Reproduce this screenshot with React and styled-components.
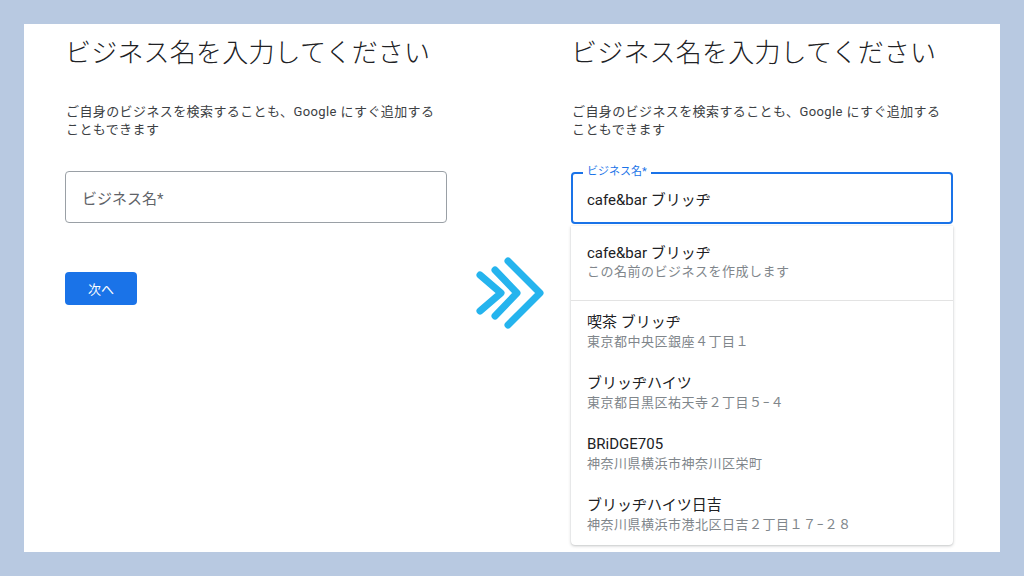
import React from "react";
import styled, { createGlobalStyle } from "styled-components";

const GlobalStyle = createGlobalStyle`
  html, body {
    margin: 0;
    padding: 0;
    background: #b8c9e1;
  }
  body {
    font-family: Roboto, "Noto Sans CJK JP", sans-serif;
    -webkit-font-smoothing: antialiased;
  }
`;

const Stage = styled.div`
  width: 1024px;
  height: 576px;
  padding: 24px;
  box-sizing: border-box;
`;

const Panel = styled.div`
  width: 976px;
  height: 528px;
  background: #ffffff;
  box-sizing: border-box;
  padding: 12px 47px 0 41px;
  display: flex;
  align-items: flex-start;
  overflow: hidden;
`;

const Column = styled.div`
  width: 382px;
  display: flex;
  flex-direction: column;
`;

const Middle = styled.div`
  width: 124px;
  display: flex;
  justify-content: center;
  padding: 219px 0 0 2px;
  box-sizing: border-box;
`;

const Title = styled.h1`
  margin: 0;
  font-family: Roboto, "Noto Sans CJK JP", sans-serif;
  font-size: 26px;
  font-weight: 300;
  line-height: 34px;
  letter-spacing: 0.2px;
  color: #202124;
  white-space: nowrap;
`;

const Desc = styled.p`
  margin: 33px 0 0 1px;
  font-size: 13px;
  line-height: 18px;
  letter-spacing: 0.4px;
  color: #3c4043;
  white-space: nowrap;
`;

const Field = styled.div`
  position: relative;
  margin-top: ${(p) => (p.$focused ? "33px" : "32px")};
  height: 52px;
  box-sizing: border-box;
  border: ${(p) => (p.$focused ? "2px solid #1a73e8" : "1px solid #9aa0a6")};
  border-radius: 4px;
  display: flex;
  align-items: center;
  padding-left: ${(p) => (p.$focused ? "14px" : "16px")};
  font-size: 15px;
  color: ${(p) => (p.$focused ? "#202124" : "#5f6368")};
`;

const FloatLabel = styled.span`
  position: absolute;
  left: 10px;
  top: -8px;
  padding: 0 4px;
  background: #ffffff;
  font-size: 11px;
  line-height: 12px;
  color: #1a73e8;
`;

const NextButton = styled.button`
  margin-top: 49px;
  width: 72px;
  height: 33px;
  border: none;
  border-radius: 4px;
  background: #1a73e8;
  color: #ffffff;
  font-family: Roboto, "Noto Sans CJK JP", sans-serif;
  font-size: 13px;
  padding: 0;
`;

const Dropdown = styled.div`
  margin-top: 2px;
  background: #ffffff;
  border-radius: 0 0 4px 4px;
  box-shadow: 0 1px 3px rgba(60, 64, 67, 0.3), 0 0 1px rgba(60, 64, 67, 0.15);
`;

const CreateRow = styled.div`
  padding: 17px 16px 19px;
  border-bottom: 1px solid #e3e3e3;
`;

const Item = styled.div`
  padding: 11px 16px;
`;

const ItemTitle = styled.div`
  font-size: 15px;
  line-height: 20px;
  color: #202124;
`;

const ItemSub = styled.div`
  font-size: 13px;
  line-height: ${(p) => (p.$tall ? "19px" : "18px")};
  color: #80868b;
  letter-spacing: 0.5px;
`;

const Chevrons = () => (
  <svg width="72" height="76" viewBox="0 0 72 76" fill="none">
    <g stroke="#25b4ee" strokeWidth="7" strokeLinecap="round" strokeLinejoin="round">
      <path d="M6 20 L27 38 L6 56" />
      <path d="M21 15 L43 38 L21 61" />
      <path d="M34 6 L66 38 L34 70" />
    </g>
  </svg>
);

const results = [
  { name: "喫茶 ブリッヂ", addr: "東京都中央区銀座４丁目１" },
  { name: "ブリッヂハイツ", addr: "東京都目黒区祐天寺２丁目５−４" },
  { name: "BRiDGE705", addr: "神奈川県横浜市神奈川区栄町" },
  { name: "ブリッヂハイツ日吉", addr: "神奈川県横浜市港北区日吉２丁目１７−２８" },
];

function Heading() {
  return (
    <>
      <Title>ビジネス名を入力してください</Title>
      <Desc>
        ご自身のビジネスを検索することも、Google にすぐ追加する
        <br />
        こともできます
      </Desc>
    </>
  );
}

export default function App() {
  return (
    <Stage>
      <GlobalStyle />
      <Panel>
        <Column>
          <Heading />
          <Field>ビジネス名*</Field>
          <NextButton>次へ</NextButton>
        </Column>
        <Middle>
          <Chevrons />
        </Middle>
        <Column>
          <Heading />
          <Field $focused>
            <FloatLabel>ビジネス名*</FloatLabel>
            cafe&amp;bar ブリッヂ
          </Field>
          <Dropdown>
            <CreateRow>
              <ItemTitle>cafe&amp;bar ブリッヂ</ItemTitle>
              <ItemSub>この名前のビジネスを作成します</ItemSub>
            </CreateRow>
            {results.map((r) => (
              <Item key={r.name}>
                <ItemTitle>{r.name}</ItemTitle>
                <ItemSub $tall>{r.addr}</ItemSub>
              </Item>
            ))}
          </Dropdown>
        </Column>
      </Panel>
    </Stage>
  );
}
